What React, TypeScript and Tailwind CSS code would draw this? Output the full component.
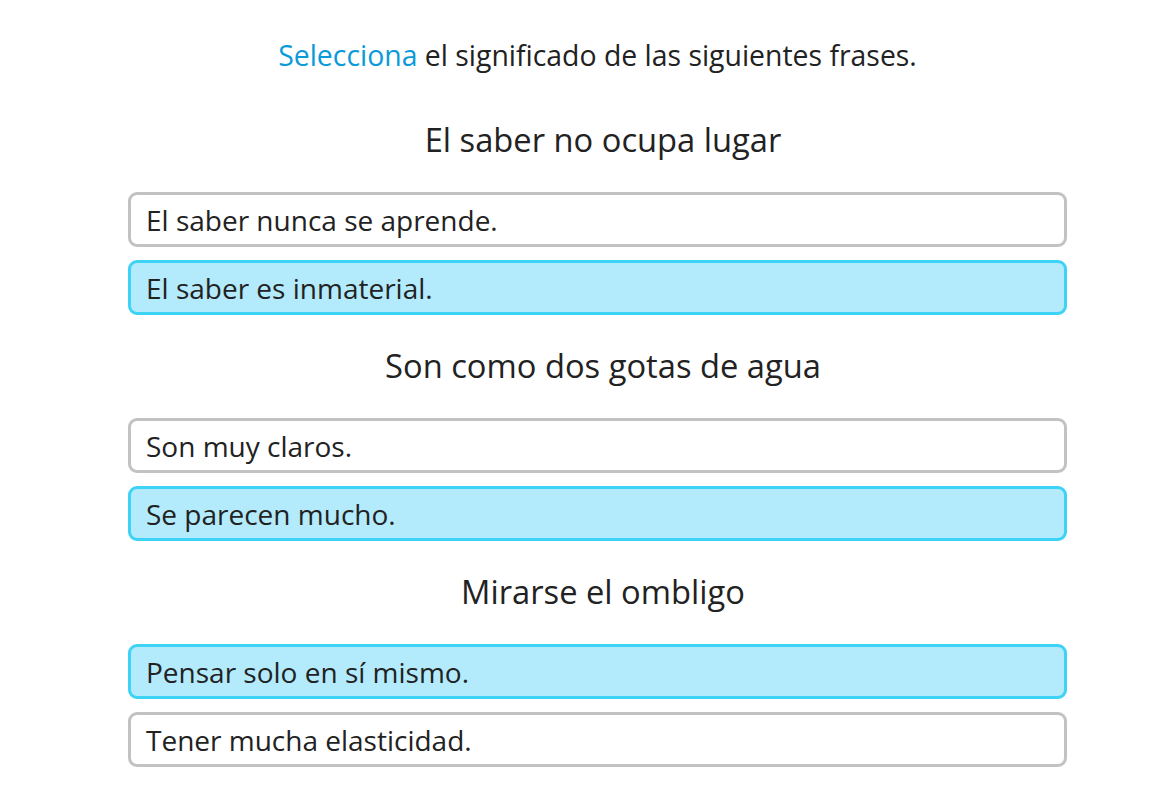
import React from "react";

const groups = [
  { title: "El saber no ocupa lugar", options: [["El saber nunca se aprende.", false], ["El saber es inmaterial.", true]] },
  { title: "Son como dos gotas de agua", options: [["Son muy claros.", false], ["Se parecen mucho.", true]] },
  { title: "Mirarse el ombligo", options: [["Pensar solo en sí mismo.", true], ["Tener mucha elasticidad.", false]] },
] as const;

export default function App() {
  return (
    <div className="min-h-[809px] bg-white text-[#222222]" style={{ fontFamily: '"Segoe UI", "Open Sans", sans-serif' }}>
      <div className="ml-[128px] w-[939px] pt-[35px]">
        <p className="text-center text-[28.4px] leading-[40px]">
          <span className="text-[#0a9ad9]">Selecciona</span> el significado de las siguientes frases.
        </p>
        {groups.map((g, i) => (
          <div key={i} className={i === 0 ? "mt-[43px]" : "mt-[29px]"}>
            <h2 className="pl-[11px] text-center text-[32.7px] leading-[44px]">{g.title}</h2>
            <div className="mt-[30px] flex flex-col gap-[13px]">
              {g.options.map(([t, sel], j) => (
                <div
                  key={j}
                  className={`flex h-[55px] items-center rounded-[9px] border-[3px] px-[15px] text-[28px] leading-[36px] ${sel ? "border-[#3dd3f6] bg-[#b3ebfd]" : "border-[#c2c2c2] bg-white"}`}
                >
                  {t}
                </div>
              ))}
            </div>
          </div>
        ))}
      </div>
    </div>
  );
}
